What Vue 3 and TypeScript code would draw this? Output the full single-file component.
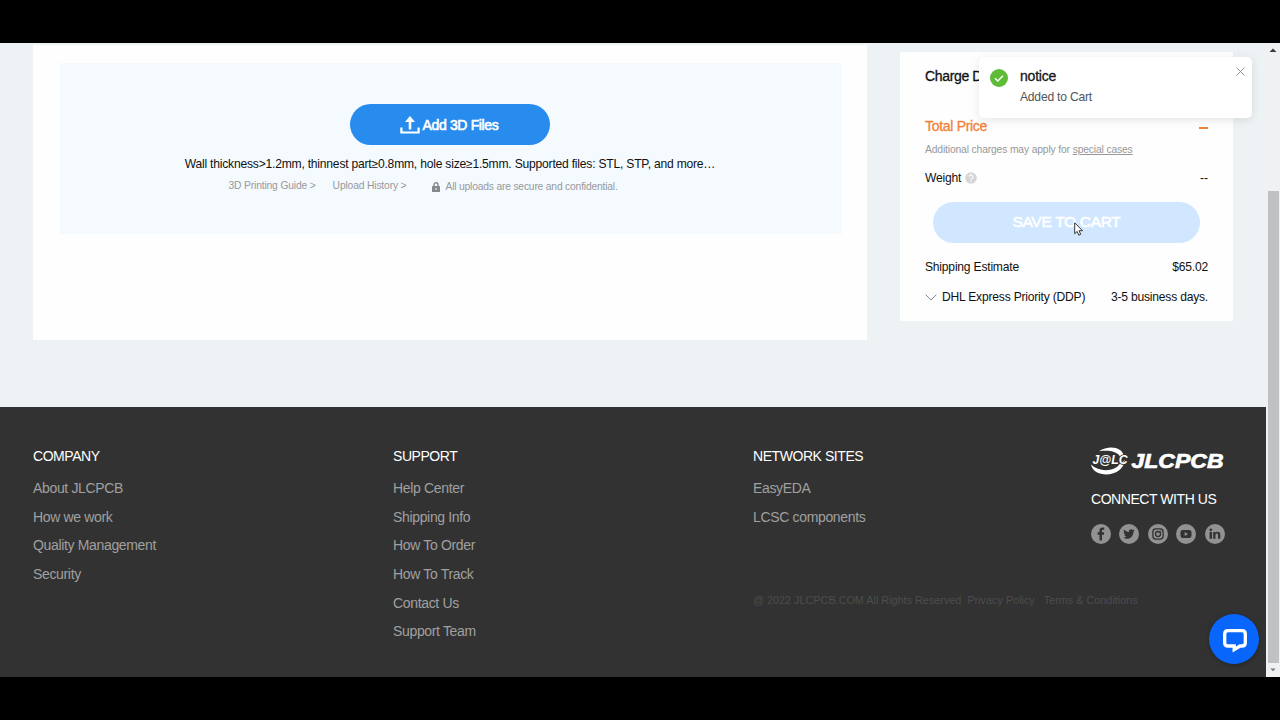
<script setup lang="ts">
interface LinkColumn {
  title: string
  links: string[]
}

const columns: LinkColumn[] = [
  { title: 'COMPANY', links: ['About JLCPCB', 'How we work', 'Quality Management', 'Security'] },
  {
    title: 'SUPPORT',
    links: ['Help Center', 'Shipping Info', 'How To Order', 'How To Track', 'Contact Us', 'Support Team'],
  },
  { title: 'NETWORK SITES', links: ['EasyEDA', 'LCSC components'] },
]
</script>

<template>
  <div class="screen">
    <div class="viewport">
      <div class="page">
        <main class="content">
          <section class="panel">
            <div class="upload">
              <button class="add">
                <svg width="20" height="18" viewBox="0 0 20 18" fill="none">
                  <path d="M1.4 11.5v5h17.2v-5" stroke="#fff" stroke-width="2.2" />
                  <path d="M10 0l5 6h-3.700v7.500H8.700V6H5z" fill="#fff" />
                </svg>
                <span>Add 3D Files</span>
              </button>
              <p class="specs">Wall thickness&gt;1.2mm, thinnest part≥0.8mm, hole size≥1.5mm. Supported files: STL, STP, and more…</p>
              <div class="hints">
                <a>3D Printing Guide &gt;</a>
                <a>Upload History &gt;</a>
                <span class="secure">
                  <svg width="8" height="10" viewBox="0 0 8 10">
                    <path d="M2 5V2.800a2 2 0 0 1 4 0V5" fill="none" stroke="#85898c" stroke-width="1.400" />
                    <rect y="4" width="8" height="6" rx=".6" fill="#85898c" />
                    <path d="M4 6v2" stroke="#f5faff" stroke-width="1" />
                  </svg>
                  All uploads are secure and confidential.
                </span>
              </div>
            </div>
          </section>

          <aside class="card">
            <h3 class="charge">Charge Details</h3>
            <div class="row total"><span>Total Price</span><i class="dash"></i></div>
            <p class="extra">Additional charges may apply for <u>special cases</u></p>
            <div class="row weight">
              <span class="label">Weight
                <svg width="12" height="12" viewBox="0 0 12 12" fill="none">
                  <circle cx="6" cy="6" r="5.800" fill="#d5d5d5" />
                  <path d="M4.100 4.700a1.900 1.900 0 1 1 2.800 1.700c-.7.4-.9.6-.9 1.200M6 8.600v1.100" stroke="#fff" stroke-width="1.100" />
                </svg>
              </span>
              <span class="none">--</span>
            </div>
            <button class="save">SAVE TO CART</button>
            <div class="row estimate"><span>Shipping Estimate</span><span>$65.02</span></div>
            <div class="row carrier">
              <span class="label">
                <svg width="12" height="7" viewBox="0 0 12 7" fill="none">
                  <path d="M.7.7L6 6 11.300.7" stroke="#777" stroke-width=".9" />
                </svg>
                DHL Express Priority (DDP)
              </span>
              <span>3-5 business days.</span>
            </div>
          </aside>
        </main>

        <footer class="footer">
          <nav v-for="col in columns" :key="col.title" class="col">
            <h4>{{ col.title }}</h4>
            <a v-for="link in col.links" :key="link">{{ link }}</a>
            <p v-if="col.title === 'NETWORK SITES'" class="legal">
              <span>@ 2022 JLCPCB.COM All Rights Reserved</span>
              <span>Privacy Policy</span>
              <span>Terms &amp; Conditions</span>
            </p>
          </nav>
          <div class="brand">
            <svg class="logo" width="136" height="28" viewBox="0 0 136 28">
              <path d="M8 4.200C17-1.500 31-1 33 9.500H29C26 4.600 19 3 8 4.200z" fill="#fff" />
              <path d="M0 17.500C2 31 31 32 34 13L29 16.500C24 25 8 25.500 0 17.500z" fill="#fff" />
              <text x="1.500" y="17.200" class="mark" textLength="35" lengthAdjust="spacingAndGlyphs">J@LC</text>
              <text x="40.500" y="21.200" class="word" textLength="92" lengthAdjust="spacingAndGlyphs">JLCPCB</text>
            </svg>
            <h4 class="connect">CONNECT WITH US</h4>
            <div class="social">
              <svg viewBox="0 0 20 20">
                <circle cx="10" cy="10" r="10" />
                <path class="ink" d="M8.500 16.500v-5.800H6.600V8.200h1.900V6.700c0-2 1.100-3.100 2.900-3.100h1.800v2.200H12c-.8 0-1 .4-1 1v1.400h2.200l-.3 2.500H11v5.800z" />
              </svg>
              <svg viewBox="0 0 20 20">
                <circle cx="10" cy="10" r="10" />
                <path class="ink" d="M15.700 6.200c-.4.200-.8.300-1.300.4.500-.3.800-.7 1-1.300-.5.300-1 .5-1.500.6a2.400 2.400 0 0 0-4 2.200c-2-.1-3.700-1-4.900-2.500-.6 1.100-.3 2.400.8 3.200-.4 0-.8-.1-1.100-.3 0 1.200.8 2.100 1.900 2.400-.3.100-.7.100-1.100 0 .3 1 1.200 1.600 2.200 1.700-1 .8-2.200 1.100-3.500 1 4.900 3 10.300-.1 10.300-6.200.5-.3.900-.7 1.200-1.200z" />
              </svg>
              <svg viewBox="0 0 20 20">
                <circle cx="10" cy="10" r="10" />
                <rect class="outline" x="4.900" y="4.900" width="10.200" height="10.200" rx="2.800" />
                <circle class="outline" cx="10" cy="10" r="2.500" />
                <circle class="ink" cx="12.900" cy="7.100" r=".7" />
              </svg>
              <svg viewBox="0 0 20 20">
                <circle cx="10" cy="10" r="10" />
                <rect class="ink" x="4.500" y="5.900" width="11" height="8.200" rx="2.300" />
                <path d="M8.700 8.100v3.800l3.300-1.900z" />
              </svg>
              <svg viewBox="0 0 20 20">
                <circle cx="10" cy="10" r="10" />
                <path class="ink" d="M4.600 8h2.400v6.800H4.600zM8.200 8h2.200v.9c.5-.8 1.200-1.100 2.200-1.100 1.900 0 2.700 1.200 2.700 3.100v3.900H13v-3.500c0-1.100-.3-1.700-1.200-1.700-1 0-1.300.7-1.300 1.700v3.500H8.200z" />
                <circle class="ink" cx="5.800" cy="5.800" r="1.350" />
              </svg>
            </div>
          </div>
        </footer>
      </div>
      <div class="scrollbar">
        <svg width="14" height="14" viewBox="0 0 14 14"><path d="M3.500 9L7 5.500 10.500 9z" fill="#3c3c3c" /></svg>
        <div class="thumb"></div>
        <svg width="14" height="14" viewBox="0 0 14 14"><path d="M4.300 5.500h5.400L7 8.300z" fill="#777" /></svg>
      </div>
    </div>

    <div class="toast">
      <svg class="ok" width="18" height="18" viewBox="0 0 18 18" fill="none">
        <circle cx="9" cy="9" r="9" fill="#5dbb36" />
        <path d="M5 9.200l2.800 2.700L13 6.700" stroke="#fff" stroke-width="1.400" />
      </svg>
      <div class="message"><strong>notice</strong><span>Added to Cart</span></div>
      <svg class="close" width="9" height="9" viewBox="0 0 9 9">
        <path d="M.5.5l8 8M8.500.5l-8 8" stroke="#8f9399" stroke-width="1" />
      </svg>
    </div>

    <div class="chat">
      <svg width="26" height="26" viewBox="0 0 26 26" fill="none">
        <path d="M6 2.700h14q3.300 0 3.300 3.300v8.700q0 3.300-3.300 3.300h-2L12.200 21.600V18H6q-3.300 0-3.300-3.300V6q0-3.300 3.300-3.300z" stroke="#fff" stroke-width="3.300" />
      </svg>
    </div>

    <svg class="cursor" width="10" height="15" viewBox="0 0 10 15">
      <path d="M.7.800v10.900l2.500-2.300 1.600 3.800 1.900-.8-1.600-3.700h3.400z" fill="#fff" stroke="#222" stroke-width=".9" />
    </svg>
  </div>
</template>

<style>
body {
  margin: 0;
  overflow: hidden;
}
</style>

<style scoped>
.screen {
  position: relative;
  box-sizing: border-box;
  width: 1280px;
  height: 720px;
  padding: 43px 0;
  background: #000;
  font-family: 'Liberation Sans', Arial, sans-serif;
  font-size: 12.1px;
  letter-spacing: -0.21px;
  color: #111;
}
h3, h4, p { margin: 0; font-weight: 400; }
button { border: 0; padding: 0; font-family: inherit; color: #fff; }
svg { display: block; flex: none; }
.viewport { display: flex; height: 634px; }
.page { width: 1266px; background: #edf2f5; }
.content {
  display: flex;
  align-items: flex-start;
  gap: 33px;
  box-sizing: border-box;
  height: 364px;
  padding: 2px 33px 0;
}
.panel {
  box-sizing: border-box;
  width: 834px;
  height: 295px;
  padding: 18px 25px 0 27px;
  background: #fefefe;
}
.upload {
  display: flex;
  flex-direction: column;
  align-items: center;
  box-sizing: border-box;
  height: 171px;
  padding: 41px 2px 0 0;
  background: #f5faff;
}
.add {
  display: flex;
  align-items: center;
  justify-content: center;
  gap: 3px;
  box-sizing: border-box;
  width: 200px;
  height: 41px;
  padding-right: 2px;
  border-radius: 21px;
  background: #288bee;
  font-size: 14px;
  letter-spacing: -0.35px;
  -webkit-text-stroke: 0.6px #fff;
}
.specs { margin-top: 11px; line-height: 16px; white-space: nowrap; }
.hints {
  display: flex;
  align-items: flex-start;
  width: 443px;
  margin-top: 8px;
  font-size: 10.3px;
  letter-spacing: -0.16px;
  line-height: 12px;
  color: #96999c;
  white-space: nowrap;
}
.hints a + a { margin-left: 17px; }
.secure { display: flex; align-items: center; gap: 5px; margin: 1px 0 0 26px; letter-spacing: -0.19px; }
.card {
  box-sizing: border-box;
  width: 333px;
  height: 269px;
  margin-top: 7px;
  padding: 16px 25px 0;
  background: #fefefe;
}
.charge { font-size: 14px; letter-spacing: -0.35px; line-height: 16px; -webkit-text-stroke: 0.3px #111; }
.row { display: flex; justify-content: space-between; line-height: 16px; }
.label { display: flex; align-items: center; gap: 4px; }
.total {
  align-items: center;
  margin-top: 34px;
  font-size: 14px;
  letter-spacing: -0.3px;
  color: #f28136;
  -webkit-text-stroke: 0.3px #f28136;
}
.dash { width: 9px; height: 1.5px; margin-top: 4px; background: #f28136; }
.extra {
  margin-top: 10px;
  font-size: 10.3px;
  letter-spacing: -0.14px;
  line-height: 12px;
  color: #96989a;
  white-space: nowrap;
}
.weight { margin-top: 14px; }
.none { letter-spacing: 0; }
.save {
  display: block;
  width: 267px;
  height: 41px;
  margin: 16px 0 0 8px;
  padding-bottom: 2px;
  border-radius: 21px;
  background: #d0e7ff;
  font-size: 15.5px;
  letter-spacing: -0.3px;
  -webkit-text-stroke: 0.6px #fff;
}
.estimate { margin-top: 16px; }
.carrier { margin-top: 14px; }
.carrier .label { gap: 5px; }
.footer {
  display: flex;
  box-sizing: border-box;
  height: 270px;
  padding: 40px 0 0 33px;
  background: #323232;
  font-size: 14px;
  letter-spacing: -0.34px;
}
.col { display: flex; flex-direction: column; width: 360px; }
.col:nth-child(3) { width: 338px; }
h4 { font-size: 14px; letter-spacing: -0.44px; line-height: 18px; color: #fff; }
.col h4 { margin-bottom: 9.1px; }
.col a { line-height: 28.65px; color: #a0a0a0; }
.legal {
  display: flex;
  gap: 6px;
  width: 400px;
  margin-top: 62px;
  font-size: 10.83px;
  letter-spacing: 0;
  line-height: 14px;
  color: #4d4d4d;
  white-space: nowrap;
}
.legal span + span + span { margin-left: 3px; }
.mark {
  font: italic 700 13px 'Liberation Sans', sans-serif;
  letter-spacing: 0;
  fill: #fff;
  stroke: #323232;
  stroke-width: 1.6px;
  paint-order: stroke;
}
.word {
  font: italic 700 20.5px 'Liberation Sans', sans-serif;
  letter-spacing: 0;
  fill: #fff;
  stroke: #fff;
  stroke-width: 0.7px;
}
.connect { margin-top: 15px; }
.social { display: flex; gap: 8.4px; margin-top: 16px; }
.social svg { width: 20px; height: 20px; fill: #929292; }
.social .ink { fill: #323232; }
.social .outline { fill: none; stroke: #323232; stroke-width: 1.3px; }
.scrollbar { display: flex; flex-direction: column; width: 14px; background: #f0f1f2; }
.thumb { width: 11px; height: 472px; margin: 134px 0 0 2px; background: #c0c1c2; }
.toast {
  position: absolute;
  top: 57px;
  left: 979px;
  display: flex;
  box-sizing: border-box;
  width: 273px;
  height: 61px;
  padding: 10px 7px 0 11px;
  border-radius: 5px;
  background: #fff;
  box-shadow: 0 2px 10px rgba(0, 0, 0, 0.1);
}
.ok { margin-top: 2px; }
.message { display: flex; flex: 1; flex-direction: column; margin-left: 12px; }
.message strong {
  margin-top: 1px;
  font-size: 14px;
  font-weight: 400;
  line-height: 16px;
  -webkit-text-stroke: 0.3px #222;
}
.message span { margin-top: 5px; line-height: 16px; color: #505357; }
.chat {
  position: absolute;
  top: 614px;
  left: 1209px;
  display: flex;
  align-items: center;
  justify-content: center;
  box-sizing: border-box;
  width: 50px;
  height: 50px;
  padding: 3px 0 0 1px;
  border-radius: 50%;
  background: #0866fc;
  box-shadow: 0 1px 5px rgba(0, 0, 0, 0.3);
}
.cursor { position: absolute; top: 222px; left: 1074px; }
</style>
